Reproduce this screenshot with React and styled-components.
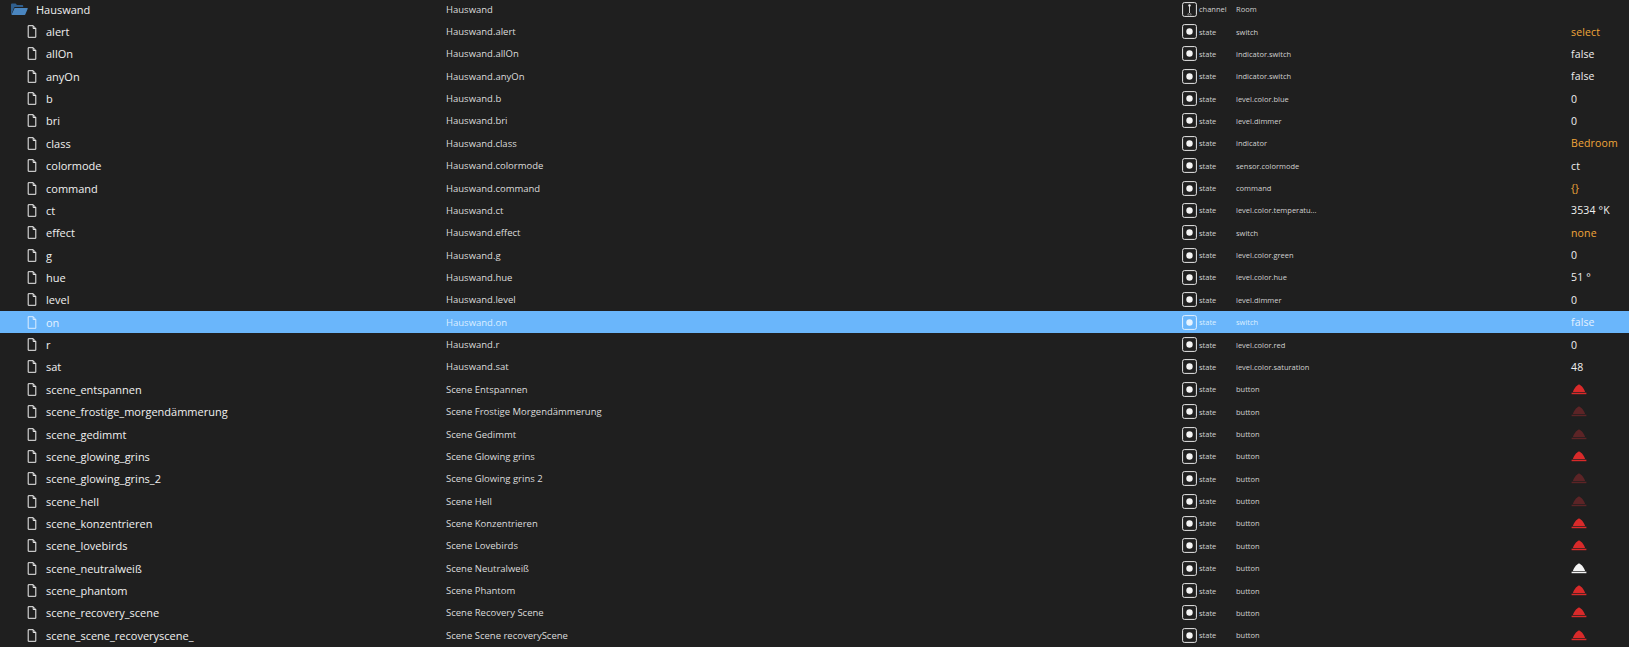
import React from 'react'
import styled, { createGlobalStyle } from 'styled-components'

const GlobalStyle = createGlobalStyle`
  html, body {
    margin: 0;
    padding: 0;
    height: 100%;
    overflow: hidden;
    background: #1f1f1f;
  }
  body {
    font-family: "Open Sans", "Noto Sans", "Liberation Sans", sans-serif;
    color: #f2f2f2;
  }
`

const Table = styled.div`
  width: 1629px;
  height: 647px;
  overflow: hidden;
  background: #1f1f1f;
  margin-top: -2px;
`

const Row = styled.div`
  display: flex;
  align-items: center;
  height: 22.36px;
  background: ${props => (props.$selected ? '#6ab6fb' : 'transparent')};
`

const NameCell = styled.div`
  width: 446px;
  display: flex;
  align-items: center;
  flex: none;
  padding-left: ${props => (props.$folder ? '10px' : '26.5px')};
  box-sizing: border-box;
`

const NameText = styled.span`
  font-size: 11px;
  margin-left: ${props => (props.$folder ? '8px' : '9.5px')};
  color: ${props => (props.$selected ? '#e4f2ff' : '#f0f0f0')};
`

const IdCell = styled.div`
  width: 736px;
  flex: none;
  font-size: 9.5px;
  color: ${props => (props.$selected ? '#dceeff' : '#dcdcdc')};
`

const TypeCell = styled.div`
  width: 54px;
  flex: none;
  display: flex;
  align-items: center;
  gap: 2px;
  font-size: 7.5px;
  color: ${props => (props.$selected ? '#dceeff' : '#d0d0d0')};
`

const RoleCell = styled.div`
  width: 335px;
  flex: none;
  font-size: 7.5px;
  color: ${props => (props.$selected ? '#dceeff' : '#d0d0d0')};
`

const ValueCell = styled.div`
  font-size: 10.5px;
  letter-spacing: 0.15px;
  display: flex;
  align-items: center;
  color: ${props => (props.$accent ? '#f0a63a' : props.$selected ? '#e4f2ff' : '#f0f0f0')};
`

const FolderIcon = () => (
  <svg width="18" height="12" viewBox="0 0 18 12">
    <path d="M1 11V1.500C1 1 1.400.6 2 .6h3.600l1.400 1.500h5.400c.5 0 .8.3.8.8V4H5.200c-.6 0-1 .3-1.200.8L1.600 11z" fill="#2f5f8f" />
    <path d="M4.600 4.900h12.600c.4 0 .7.4.5.8l-2.400 5.700c-.1.3-.4.5-.7.5H1.400z" fill="#4a86c0" />
  </svg>
)

const FileIcon = ({ selected }) => (
  <svg width="10" height="13" viewBox="0 0 10 13" fill="none">
    <path
      d="M1.200.7h5l2.600 2.800v8.800H1.200z M6.200.7v2.800h2.600"
      stroke={selected ? '#dceeff' : '#f0f0f0'}
      strokeWidth="1"
      strokeLinejoin="round"
    />
  </svg>
)

const TypeIcon = ({ kind, selected }) => {
  const c = selected ? '#e4f2ff' : '#e8e8e8'
  return (
    <svg width="15" height="15" viewBox="0 0 15 15" fill="none" style={{ flex: 'none' }}>
      <rect x="0.6" y="0.6" width="13.8" height="13.8" rx="1.8" stroke={c} strokeWidth="1" />
      {kind === 'channel' ? (
        <>
          <circle cx="7.5" cy="3.4" r="1.2" fill={c} />
          <path d="M7.500 4v7" stroke={c} strokeWidth="0.9" />
          <circle cx="6.400" cy="12.300" r="0.7" stroke={c} strokeWidth="0.4" />
          <circle cx="8.600" cy="12.300" r="0.7" stroke={c} strokeWidth="0.4" />
        </>
      ) : (
        <circle cx="7.5" cy="7.5" r="3.2" fill={selected ? '#e8f4ff' : '#f4f4f4'} />
      )}
    </svg>
  )
}

const BellIcon = ({ color }) => (
  <svg width="16" height="11" viewBox="0 0 16 11">
    <path d="M8 .4c.7 0 1.200.5 1.700 1.100 1.800.9 3.600 4 4.400 6.600H1.900C2.700 5.500 4.500 2.400 6.300 1.500 6.800.9 7.300.4 8 .4z" fill={color} />
    <rect x="0.6" y="8.700" width="14.800" height="1.500" fill={color} />
  </svg>
)

const states = [
  ['alert', 'Hauswand.alert', 'switch', 'select', true],
  ['allOn', 'Hauswand.allOn', 'indicator.switch', 'false'],
  ['anyOn', 'Hauswand.anyOn', 'indicator.switch', 'false'],
  ['b', 'Hauswand.b', 'level.color.blue', '0'],
  ['bri', 'Hauswand.bri', 'level.dimmer', '0'],
  ['class', 'Hauswand.class', 'indicator', 'Bedroom', true],
  ['colormode', 'Hauswand.colormode', 'sensor.colormode', 'ct'],
  ['command', 'Hauswand.command', 'command', '{}', true],
  ['ct', 'Hauswand.ct', 'level.color.temperatu...', '3534 °K'],
  ['effect', 'Hauswand.effect', 'switch', 'none', true],
  ['g', 'Hauswand.g', 'level.color.green', '0'],
  ['hue', 'Hauswand.hue', 'level.color.hue', '51 °'],
  ['level', 'Hauswand.level', 'level.dimmer', '0'],
  ['on', 'Hauswand.on', 'switch', 'false'],
  ['r', 'Hauswand.r', 'level.color.red', '0'],
  ['sat', 'Hauswand.sat', 'level.color.saturation', '48'],
]

const scenes = [
  ['scene_entspannen', 'Scene Entspannen', '#d92a2a'],
  ['scene_frostige_morgendämmerung', 'Scene Frostige Morgendämmerung', '#5c2426'],
  ['scene_gedimmt', 'Scene Gedimmt', '#5c2426'],
  ['scene_glowing_grins', 'Scene Glowing grins', '#d92a2a'],
  ['scene_glowing_grins_2', 'Scene Glowing grins 2', '#5c2426'],
  ['scene_hell', 'Scene Hell', '#5c2426'],
  ['scene_konzentrieren', 'Scene Konzentrieren', '#d92a2a'],
  ['scene_lovebirds', 'Scene Lovebirds', '#d92a2a'],
  ['scene_neutralweiß', 'Scene Neutralweiß', '#f4f4f4'],
  ['scene_phantom', 'Scene Phantom', '#d92a2a'],
  ['scene_recovery_scene', 'Scene Recovery Scene', '#d92a2a'],
  ['scene_scene_recoveryscene_', 'Scene Scene recoveryScene', '#d92a2a'],
]

const StateRow = ({ name, id, kind = 'state', role, selected, children }) => (
  <Row $selected={selected}>
    <NameCell>
      <FileIcon selected={selected} />
      <NameText $selected={selected}>{name}</NameText>
    </NameCell>
    <IdCell $selected={selected}>{id}</IdCell>
    <TypeCell $selected={selected}>
      <TypeIcon kind={kind} selected={selected} />
      {kind}
    </TypeCell>
    <RoleCell $selected={selected}>{role}</RoleCell>
    {children}
  </Row>
)

export default function App() {
  return (
    <>
      <GlobalStyle />
      <Table>
        <Row>
          <NameCell $folder>
            <FolderIcon />
            <NameText $folder>Hauswand</NameText>
          </NameCell>
          <IdCell>Hauswand</IdCell>
          <TypeCell>
            <TypeIcon kind="channel" />
            channel
          </TypeCell>
          <RoleCell>Room</RoleCell>
        </Row>
        {states.map(([name, id, role, value, accent]) => (
          <StateRow key={name} name={name} id={id} role={role} selected={name === 'on'}>
            <ValueCell $accent={accent} $selected={name === 'on'}>{value}</ValueCell>
          </StateRow>
        ))}
        {scenes.map(([name, id, color]) => (
          <StateRow key={name} name={name} id={id} role="button">
            <ValueCell>
              <BellIcon color={color} />
            </ValueCell>
          </StateRow>
        ))}
      </Table>
    </>
  )
}
